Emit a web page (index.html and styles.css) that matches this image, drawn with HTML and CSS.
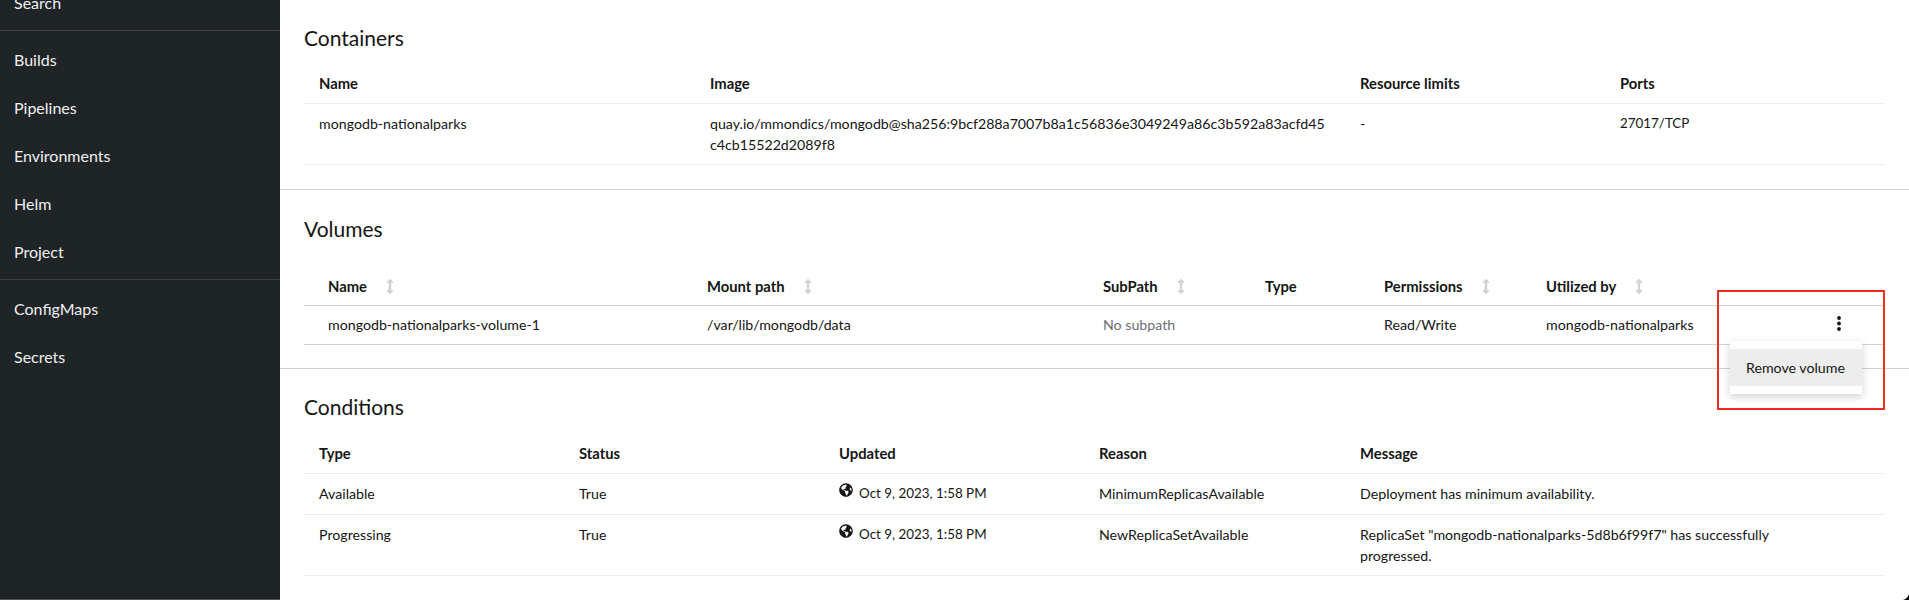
FILE: index.html
```html
<!DOCTYPE html>
<html lang="en">
<head>
<meta charset="utf-8">
<title>Deployment details</title>
<link rel="stylesheet" href="styles.css">
</head>
<body>
<svg class="defs" width="0" height="0" aria-hidden="true">
  <symbol id="sort" viewBox="0 0 256 512"><path d="M214.059 377.941H168V134.059h46.059c21.382 0 32.09-25.851 16.971-40.971L144.971 7.029c-9.373-9.373-24.569-9.373-33.941 0L24.971 93.088c-15.119 15.119-4.411 40.971 16.971 40.971H88v243.882H41.941c-21.382 0-32.09 25.851-16.971 40.971l86.059 86.059c9.373 9.373 24.569 9.373 33.941 0l86.059-86.059c15.12-15.119 4.412-40.971-16.97-40.971z"/></symbol>
  <symbol id="globe" viewBox="0 0 496 512"><path d="M248 8C111.03 8 0 119.03 0 256s111.03 248 248 248 248-111.03 248-248S384.97 8 248 8zm82.29 357.6c-3.9 3.88-7.99 7.95-11.31 11.28-2.99 3-5.1 6.7-6.17 10.71-1.51 5.66-2.73 11.38-4.77 16.87l-17.39 46.85c-13.76 3-28 4.69-42.65 4.69v-27.38c1.69-12.62-7.64-36.26-22.63-51.25-6-6-9.37-14.14-9.37-22.63v-32.01c0-11.64-6.27-22.34-16.46-27.97-14.37-7.95-34.81-19.06-48.81-26.11-11.48-5.78-22.1-13.14-31.65-21.75l-.8-.72a114.792 114.792 0 0 1-18.06-20.74c-9.38-13.77-24.66-36.42-34.59-51.14 20.47-45.5 57.36-82.04 103.2-101.89l24.01 12.01C203.48 89.74 216 82.01 216 70.11v-11.3c7.99-1.29 16.12-2.11 24.39-2.42l28.3 28.3c6.25 6.25 6.25 16.38 0 22.63L264 112l-10.34 10.34c-3.12 3.12-3.12 8.19 0 11.31l4.69 4.69c3.12 3.12 3.12 8.19 0 11.31l-8 8a8.008 8.008 0 0 1-5.66 2.34h-8.99c-2.08 0-4.08.81-5.58 2.27l-9.92 9.65a8.008 8.008 0 0 0-1.58 9.31l15.59 31.19c2.66 5.32-1.21 11.58-7.15 11.58h-5.64c-1.93 0-3.79-.7-5.24-1.96l-9.28-8.06a16.017 16.017 0 0 0-15.55-3.1l-31.17 10.39a11.95 11.95 0 0 0-8.17 11.34c0 4.53 2.56 8.66 6.61 10.69l11.08 5.54c9.41 4.71 19.79 7.16 30.31 7.16s22.59 27.29 32 32h66.75c8.49 0 16.62 3.37 22.63 9.37l13.69 13.69a30.503 30.503 0 0 1 8.93 21.57 46.536 46.536 0 0 1-13.72 32.98zM417 274.25c-5.79-1.45-10.84-5-14.15-9.97l-17.98-26.97a23.97 23.97 0 0 1 0-26.62l19.59-29.38c2.32-3.47 5.5-6.29 9.24-8.15l12.98-6.49C440.2 193.59 448 223.87 448 256c0 8.67-.74 17.16-1.82 25.54L417 274.25z"/></symbol>
</svg>
<div class="shell">
  <nav class="sidebar">
    <ul class="nav-group nav-first">
      <li>Search</li>
    </ul>
    <ul class="nav-group">
      <li>Builds</li>
      <li>Pipelines</li>
      <li>Environments</li>
      <li>Helm</li>
      <li>Project</li>
    </ul>
    <ul class="nav-group">
      <li>ConfigMaps</li>
      <li>Secrets</li>
    </ul>
  </nav>
  <main class="main">
    <section class="section section-first">
      <h2>Containers</h2>
      <table class="table table-light cols-containers">
        <thead>
          <tr><th class="c1">Name</th><th class="c2">Image</th><th class="c3">Resource limits</th><th>Ports</th></tr>
        </thead>
        <tbody>
          <tr>
            <td>mongodb-nationalparks</td>
            <td class="wrap">quay.io/mmondics/mongodb@sha256:9bcf288a7007b8a1c56836e3049249a86c3b592a83acfd45c4cb15522d2089f8</td>
            <td>-</td>
            <td class="num">27017/TCP</td>
          </tr>
        </tbody>
      </table>
    </section>
    <section class="section section-volumes">
      <h2>Volumes</h2>
      <table class="table table-strong">
        <thead>
          <tr>
            <th class="v1">Name<svg class="sort"><use href="#sort"/></svg></th>
            <th class="v2">Mount path<svg class="sort"><use href="#sort"/></svg></th>
            <th class="v3">SubPath<svg class="sort"><use href="#sort"/></svg></th>
            <th class="v4">Type</th>
            <th class="v5">Permissions<svg class="sort"><use href="#sort"/></svg></th>
            <th class="v6">Utilized by<svg class="sort"><use href="#sort"/></svg></th>
            <th class="v7"></th>
          </tr>
        </thead>
        <tbody>
          <tr>
            <td>mongodb-nationalparks-volume-1</td>
            <td>/var/lib/mongodb/data</td>
            <td class="muted">No subpath</td>
            <td></td>
            <td>Read/Write</td>
            <td>mongodb-nationalparks</td>
            <td class="kebab-cell">
              <svg class="kebab" viewBox="0 0 4 15"><circle cx="2" cy="2" r="1.9"/><circle cx="2" cy="7.5" r="1.9"/><circle cx="2" cy="13" r="1.9"/></svg>
            </td>
          </tr>
        </tbody>
      </table>
    </section>
    <section class="section section-last">
      <h2>Conditions</h2>
      <table class="table table-light">
        <thead>
          <tr><th class="d1">Type</th><th class="d2">Status</th><th class="d3">Updated</th><th class="d4">Reason</th><th>Message</th></tr>
        </thead>
        <tbody>
          <tr>
            <td>Available</td><td>True</td>
            <td class="num"><svg class="globe"><use href="#globe"/></svg>Oct 9, 2023, 1:58 PM</td>
            <td>MinimumReplicasAvailable</td>
            <td class="message">Deployment has minimum availability.</td>
          </tr>
          <tr>
            <td>Progressing</td><td>True</td>
            <td class="num"><svg class="globe"><use href="#globe"/></svg>Oct 9, 2023, 1:58 PM</td>
            <td>NewReplicaSetAvailable</td>
            <td class="message">ReplicaSet "mongodb-nationalparks-5d8b6f99f7" has successfully progressed.</td>
          </tr>
        </tbody>
      </table>
    </section>
    <div class="menu"><div class="menu-item">Remove volume</div></div>
    <div class="callout"></div>
  </main>
</div>
<svg class="corner" viewBox="0 0 8 8"><path d="M8 0 V8 H0 C4 7 7 4 8 0 Z"/></svg>
</body>
</html>
```
FILE: styles.css
```css
* { box-sizing: border-box; }
html, body { margin: 0; height: 600px; overflow: hidden; background: #fff; }
body {
  font-family: "Lato", "Liberation Sans", sans-serif;
  font-size: 14.2px;
  line-height: 21px;
  color: #151515;
  position: relative;
}
.defs { position: absolute; }
.shell { display: flex; height: 600px; }

.sidebar {
  width: 280px;
  flex: none;
  height: 600px;
  background: #1f2427;
  border-bottom: 1px solid #4f5255;
  color: #f0f0f0;
  font-size: 16px;
  overflow: hidden;
}
.nav-group {
  list-style: none;
  margin: 0;
  padding: 5px 0 3px;
  border-bottom: 1px solid #3c3f42;
}
.nav-group:last-child { border-bottom: 0; }
.nav-first { margin-top: -21px; padding-top: 0; }
.nav-group li {
  height: 48px;
  line-height: 48px;
  padding-left: 14px;
}

.main { flex: 1; min-width: 0; position: relative; }
.section { padding: 24px 24px 24px 24px; border-bottom: 1px solid #d2d2d2; }
.section-first { padding-top: 23px; }
.section-volumes { padding-bottom: 23px; }
.section-last { border-bottom: 0; padding-top: 23px; }
h2 {
  margin: 0 0 10px;
  font-size: 21px;
  line-height: 30px;
  font-weight: 400;
  color: #151515;
}
.section-last h2 { margin-bottom: 11px; }

.table { width: 100%; border-collapse: collapse; table-layout: fixed; }
.table th {
  text-align: left;
  font-size: 14.8px;
  font-weight: 700;
  height: 40px;
  padding: 2px 15px 0;
  vertical-align: middle;
}
.table td { padding: 9px 15px; vertical-align: top; }
.table-light tr { border-bottom: 1px solid #ededed; }
.table-strong tr { border-bottom: 1px solid #d2d2d2; }
.wrap { word-break: break-all; }
.muted { color: #6a6e73; }
.table td.num { font-size: 13.4px; }
.table td.message { padding-right: 70px; }

.section-last tbody td { height: 41px; }

.c1 { width: 391px; }
.c2 { width: 650px; }
.c3 { width: 260px; }

.d1, .d2, .d3 { width: 260px; }
.d4 { width: 261px; }

.section-volumes h2 { margin-bottom: 21px; }
.table-strong th { padding: 4px 0 0 23px; height: 41px; }
.table-strong td { padding: 8px 0 9px 23px; white-space: nowrap; }
.table-strong tr > :first-child { padding-left: 24px; }
.v1 { width: 380px; }
.v2 { width: 396px; }
.v3 { width: 162px; }
.v4 { width: 119px; }
.v5 { width: 162px; }
.v6 { width: 172px; }

.sort {
  width: 8px;
  height: 15px;
  margin-left: 19px;
  fill: #d2d2d2;
  vertical-align: -2px;
}

.kebab { display: block; width: 4px; height: 15px; margin: 2px 0 0 119px; fill: #151515; }

.globe { width: 14px; height: 14px; margin-right: 6px; vertical-align: 1px; fill: #151515; }

.menu {
  position: absolute;
  left: 1450px;
  top: 341px;
  width: 132px;
  height: 53px;
  padding: 8px 0;
  background: #fff;
  box-shadow: 0 3px 8px rgba(3, 3, 3, 0.18);
}
.menu-item { height: 37px; line-height: 37px; padding-left: 16px; background: #ededed; }
.callout {
  position: absolute;
  left: 1437px;
  top: 290px;
  width: 168px;
  height: 120px;
  border: 2px solid #ee2b24;
}
.corner { position: absolute; right: 0; bottom: 0; width: 6px; height: 6px; fill: #000; }
```
